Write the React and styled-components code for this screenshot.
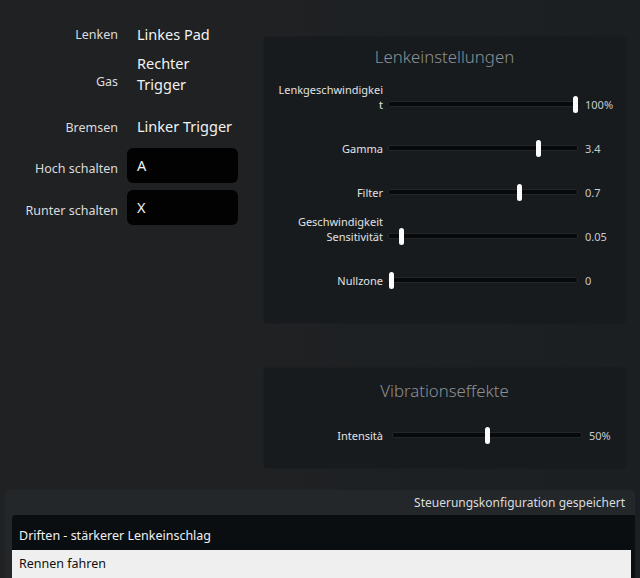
import React from "react";
import styled, { createGlobalStyle } from "styled-components";

const GlobalStyle = createGlobalStyle`
  html, body {
    margin: 0;
    padding: 0;
    background: #1e2022;
  }
  body {
    font-family: "Noto Sans", "Open Sans", sans-serif;
    color: #e6e6e6;
  }
`;

const Window = styled.div`
  width: 640px;
  height: 578px;
  overflow: hidden;
  display: flex;
  flex-direction: column;
  background: linear-gradient(90deg, #202123 0%, #1f2123 40%, #1b1f22 100%);
`;

const Main = styled.div`
  display: flex;
  height: 490px;
`;

const Bindings = styled.div`
  width: 264px;
  padding-top: 22px;
  box-sizing: border-box;
  display: flex;
  flex-direction: column;
`;

const BindRow = styled.div`
  display: flex;
  align-items: ${(p) => p.$align || "center"};
  height: ${(p) => p.$h}px;
  margin-top: ${(p) => p.$mt || 0}px;
`;

const BindLabel = styled.div`
  width: 118px;
  text-align: right;
  font-size: 12.5px;
  line-height: 21px;
  color: #dcdcdc;
  padding-top: ${(p) => p.$pt || 0}px;
  padding-bottom: ${(p) => p.$pb || 0}px;
  flex-shrink: 0;
`;

const BindValue = styled.div`
  margin-left: 9px;
  padding-left: 10px;
  width: 111px;
  box-sizing: border-box;
  font-size: 14.5px;
  line-height: 21px;
  color: #f2f2f2;
`;

const KeyBox = styled.div`
  margin-left: 9px;
  width: 111px;
  height: 35px;
  box-sizing: border-box;
  padding: 7px 10px 0;
  background: #020202;
  border-radius: 6px;
  font-size: 14.5px;
  line-height: 20px;
  color: #f2f2f2;
`;

const Panels = styled.div`
  width: 361px;
  padding-top: 37px;
  display: flex;
  flex-direction: column;
  gap: 45px;
`;

const Panel = styled.section`
  background: #171b1e;
  border-radius: 4px;
  box-shadow: 0 0 2px rgba(0, 0, 0, 0.25);
  padding: ${(p) => p.$pad};
`;

const PanelTitle = styled.h2`
  margin: 0 0 ${(p) => p.$mb}px;
  text-align: center;
  font-size: 16.8px;
  font-weight: 300;
  line-height: 24px;
  color: #8b9095;
`;

const SliderRow = styled.div`
  display: flex;
  align-items: flex-end;
  height: 44px;
  box-sizing: border-box;
  padding-bottom: 14.5px;
`;

const SliderLabel = styled.div`
  width: 119px;
  padding-left: 10px;
  box-sizing: border-box;
  text-align: right;
  font-size: 11px;
  line-height: 15px;
  color: #e2e2e2;
  flex-shrink: 0;
`;

const Track = styled.div`
  position: relative;
  margin-left: ${(p) => p.$gap}px;
  width: 190px;
  height: 15px;
  flex-shrink: 0;

  &::before {
    content: "";
    position: absolute;
    left: 0;
    right: 0;
    top: 4px;
    height: 6px;
    box-sizing: border-box;
    background: #07090a;
    border: 1px solid #23272a;
    border-radius: 2px;
  }
`;

const Thumb = styled.div`
  position: absolute;
  top: -1px;
  width: 5px;
  height: 17px;
  margin-left: -2.5px;
  background: #fbfbfb;
  border-radius: 3px;
`;

const SliderValue = styled.div`
  margin-left: 7px;
  font-size: 11px;
  line-height: 15px;
  color: #c6cacd;
`;

const Footer = styled.div`
  margin: 1px 5px 0;
  flex: 1;
  background: #24272a;
  border-radius: 5px 5px 0 0;
  display: flex;
  flex-direction: column;
`;

const Status = styled.div`
  text-align: right;
  padding: 5px 10px 0 0;
  height: 25px;
  box-sizing: border-box;
  font-size: 12px;
  line-height: 16px;
  color: #dadcde;
`;

const List = styled.ul`
  list-style: none;
  margin: 0 0 0 7px;
  padding: 7px 4px 0 0;
  flex: 1;
  background: #0b0e10;
  border-radius: 4px 0 0 0;
`;

const Item = styled.li`
  height: 28px;
  padding-left: 7px;
  font-size: 12.5px;
  line-height: 28px;
  color: ${(p) => (p.$selected ? "#101010" : "#f0f0f0")};
  background: ${(p) => (p.$selected ? "#efefef" : "transparent")};
`;

function Slider({ label, value, pos, gap = 5 }) {
  return (
    <SliderRow>
      <SliderLabel>{label}</SliderLabel>
      <Track $gap={gap}>
        <Thumb style={{ left: `${3 + pos * 184}px` }} />
      </Track>
      <SliderValue>{value}</SliderValue>
    </SliderRow>
  );
}

export default function App() {
  return (
    <>
      <GlobalStyle />
      <Window>
        <Main>
          <Bindings>
            <BindRow $h={24}>
              <BindLabel>Lenken</BindLabel>
              <BindValue>Linkes Pad</BindValue>
            </BindRow>
            <BindRow $h={43} $mt={6} $align="flex-end">
              <BindLabel $pb={3}>Gas</BindLabel>
              <BindValue>Rechter Trigger</BindValue>
            </BindRow>
            <BindRow $h={26} $mt={18}>
              <BindLabel $pt={2}>Bremsen</BindLabel>
              <BindValue>Linker Trigger</BindValue>
            </BindRow>
            <BindRow $h={35} $mt={9}>
              <BindLabel $pt={6}>Hoch schalten</BindLabel>
              <KeyBox>A</KeyBox>
            </BindRow>
            <BindRow $h={35} $mt={7}>
              <BindLabel $pt={6}>Runter schalten</BindLabel>
              <KeyBox>X</KeyBox>
            </BindRow>
          </Bindings>

          <Panels>
            <Panel $pad="8px 0 21px">
              <PanelTitle $mb={13}>Lenkeinstellungen</PanelTitle>
              <Slider
                label={<>Lenkgeschwindigkei<br />t</>}
                value="100%"
                pos={1}
              />
              <Slider label="Gamma" value="3.4" pos={0.8} />
              <Slider label="Filter" value="0.7" pos={0.7} />
              <Slider
                label={<>Geschwindigkeit<br />Sensitivität</>}
                value="0.05"
                pos={0.055}
              />
              <Slider label="Nullzone" value="0" pos={0} />
            </Panel>
            <Panel $pad="11px 0 11px">
              <PanelTitle $mb={10}>Vibrationseffekte</PanelTitle>
              <Slider label="Intensità" value="50%" pos={0.5} gap={9} />
            </Panel>
          </Panels>
        </Main>

        <Footer>
          <Status>Steuerungskonfiguration gespeichert</Status>
          <List>
            <Item>Driften - stärkerer Lenkeinschlag</Item>
            <Item $selected>Rennen fahren</Item>
          </List>
        </Footer>
      </Window>
    </>
  );
}
